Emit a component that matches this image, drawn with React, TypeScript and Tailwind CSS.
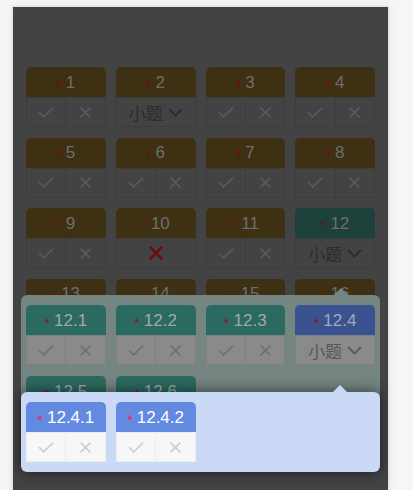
import React from 'react'

type Body = 'judge' | 'sub' | 'wrong'
type Theme = {
  head: string
  num: string
  star: string
  body: string
  icon: string
  sub: string
}

const DIM_YELLOW: Theme = {
  head: 'bg-[#3e3012]',
  num: 'text-[#6e6e6e]',
  star: 'text-[#7c0a0a]',
  body: 'bg-[#434343] border-[#3c3c3c] divide-[#3c3c3c]',
  icon: 'text-[#5a5a5a]',
  sub: 'text-[#2c2c2c]',
}
const DIM_TEAL: Theme = { ...DIM_YELLOW, head: 'bg-[#1c403a]' }

const MID_TEAL: Theme = {
  head: 'bg-[#2b6a60]',
  num: 'text-[#a1aaa8]',
  star: 'text-[#a0101c]',
  body: 'bg-[#8a8a8a] border-[#808080] divide-[#7e7e7e]',
  icon: 'text-[#707070]',
  sub: 'text-[#585858]',
}
const MID_BLUE: Theme = { ...MID_TEAL, head: 'bg-[#3b5291]', num: 'text-[#a3a9b6]' }

const LIGHT_BLUE: Theme = {
  head: 'bg-[#628ae0]',
  num: 'text-white',
  star: 'text-[#ff1744]',
  body: 'bg-[#f7f7f7] border-[#ededed] divide-[#ececec]',
  icon: 'text-[#cdcdcd]',
  sub: 'text-[#333]',
}

const Check = () => (
  <svg width="16" height="11" viewBox="0 0 16 11" fill="none" stroke="currentColor" strokeWidth="1.6">
    <path d="M1 5.2l4.6 4.6L15 0.8" />
  </svg>
)
const Cross = ({ size = 11, w = 1.6 }: { size?: number; w?: number }) => (
  <svg width={size} height={size} viewBox="0 0 11 11" fill="none" stroke="currentColor" strokeWidth={w}>
    <path d="M0.6 0.6l9.8 9.8M10.4 0.6l-9.8 9.8" />
  </svg>
)
const Chevron = () => (
  <svg width="15" height="9" viewBox="0 0 15 9" fill="none" stroke="currentColor" strokeWidth="1.8">
    <path d="M1 1l6.5 6.5L14 1" />
  </svg>
)

function Card({ label, theme, body = 'judge' }: { label: string; theme: Theme; body?: Body }) {
  return (
    <div className="flex flex-col">
      <div className={`h-[30px] rounded-t-[5px] flex items-center justify-center ${theme.head}`}>
        <span className={`text-[14px] leading-none mr-[4px] translate-y-[3px] ${theme.star}`}>*</span>
        <span className={`text-[17px] leading-none ${theme.num}`}>{label}</span>
      </div>
      {body === 'judge' && (
        <div className={`h-[30px] border flex divide-x ${theme.body}`}>
          <div className={`flex-1 flex items-center justify-center ${theme.icon}`}><Check /></div>
          <div className={`flex-1 flex items-center justify-center ${theme.icon}`}><Cross /></div>
        </div>
      )}
      {body === 'sub' && (
        <div className={`h-[30px] border flex items-center justify-center gap-[5px] ${theme.body} ${theme.sub}`}>
          <span className="text-[17px] leading-none font-['Noto_Sans_CJK_SC',sans-serif]">小题</span>
          <Chevron />
        </div>
      )}
      {body === 'wrong' && (
        <div className={`h-[30px] border flex items-center justify-center text-[#6e0c0c] ${theme.body}`}>
          <Cross size={14} w={2} />
        </div>
      )}
    </div>
  )
}

const MAIN: { n: string; body?: Body; teal?: boolean }[] = [
  { n: '1' }, { n: '2', body: 'sub' }, { n: '3' }, { n: '4' },
  { n: '5' }, { n: '6' }, { n: '7' }, { n: '8' },
  { n: '9' }, { n: '10', body: 'wrong' }, { n: '11' }, { n: '12', body: 'sub', teal: true },
  { n: '13' }, { n: '14' }, { n: '15' }, { n: '16' },
]

export default function App() {
  return (
    <div className="h-[490px] overflow-hidden bg-[#f6f6f6] pt-[6px] pl-[12px] font-['Liberation_Sans',Arial,sans-serif]">
      <div className="relative w-[377px] h-[600px] border border-[#e2e2e2] bg-[#434343] overflow-hidden shadow-[0_0_8px_rgba(0,0,0,0.08)]">
        <div className="pt-[60px] px-[13px] grid grid-cols-4 gap-x-[10px] gap-y-[10.5px]">
          {MAIN.map(c => (
            <Card key={c.n} label={c.n} body={c.body} theme={c.teal ? DIM_TEAL : DIM_YELLOW} />
          ))}
        </div>

        {/* sub questions of 12 */}
        <div className="absolute left-[8px] top-[288px] w-[359px] rounded-[6px] bg-[#758581] px-[5px] py-[10px]">
          <div className="absolute -top-[7px] left-[313px] w-0 h-0 border-x-[7px] border-b-[7px] border-x-transparent border-b-[#758581]" />
          <div className="grid grid-cols-4 gap-x-[10px] gap-y-[11px]">
            <Card label="12.1" theme={MID_TEAL} />
            <Card label="12.2" theme={MID_TEAL} />
            <Card label="12.3" theme={MID_TEAL} />
            <Card label="12.4" theme={MID_BLUE} body="sub" />
            <Card label="12.5" theme={MID_TEAL} />
            <Card label="12.6" theme={MID_TEAL} />
          </div>
        </div>

        {/* sub questions of 12.4 */}
        <div className="absolute left-[8px] top-[385px] w-[359px] rounded-[6px] bg-[#cad9f6] px-[5px] py-[10px] shadow-[0_0_14px_rgba(0,0,0,0.6)]">
          <div className="absolute -top-[7px] left-[312px] w-0 h-0 border-x-[7px] border-b-[7px] border-x-transparent border-b-[#cad9f6]" />
          <div className="grid grid-cols-4 gap-x-[10px]">
            <Card label="12.4.1" theme={LIGHT_BLUE} />
            <Card label="12.4.2" theme={LIGHT_BLUE} />
          </div>
        </div>
      </div>
    </div>
  )
}
